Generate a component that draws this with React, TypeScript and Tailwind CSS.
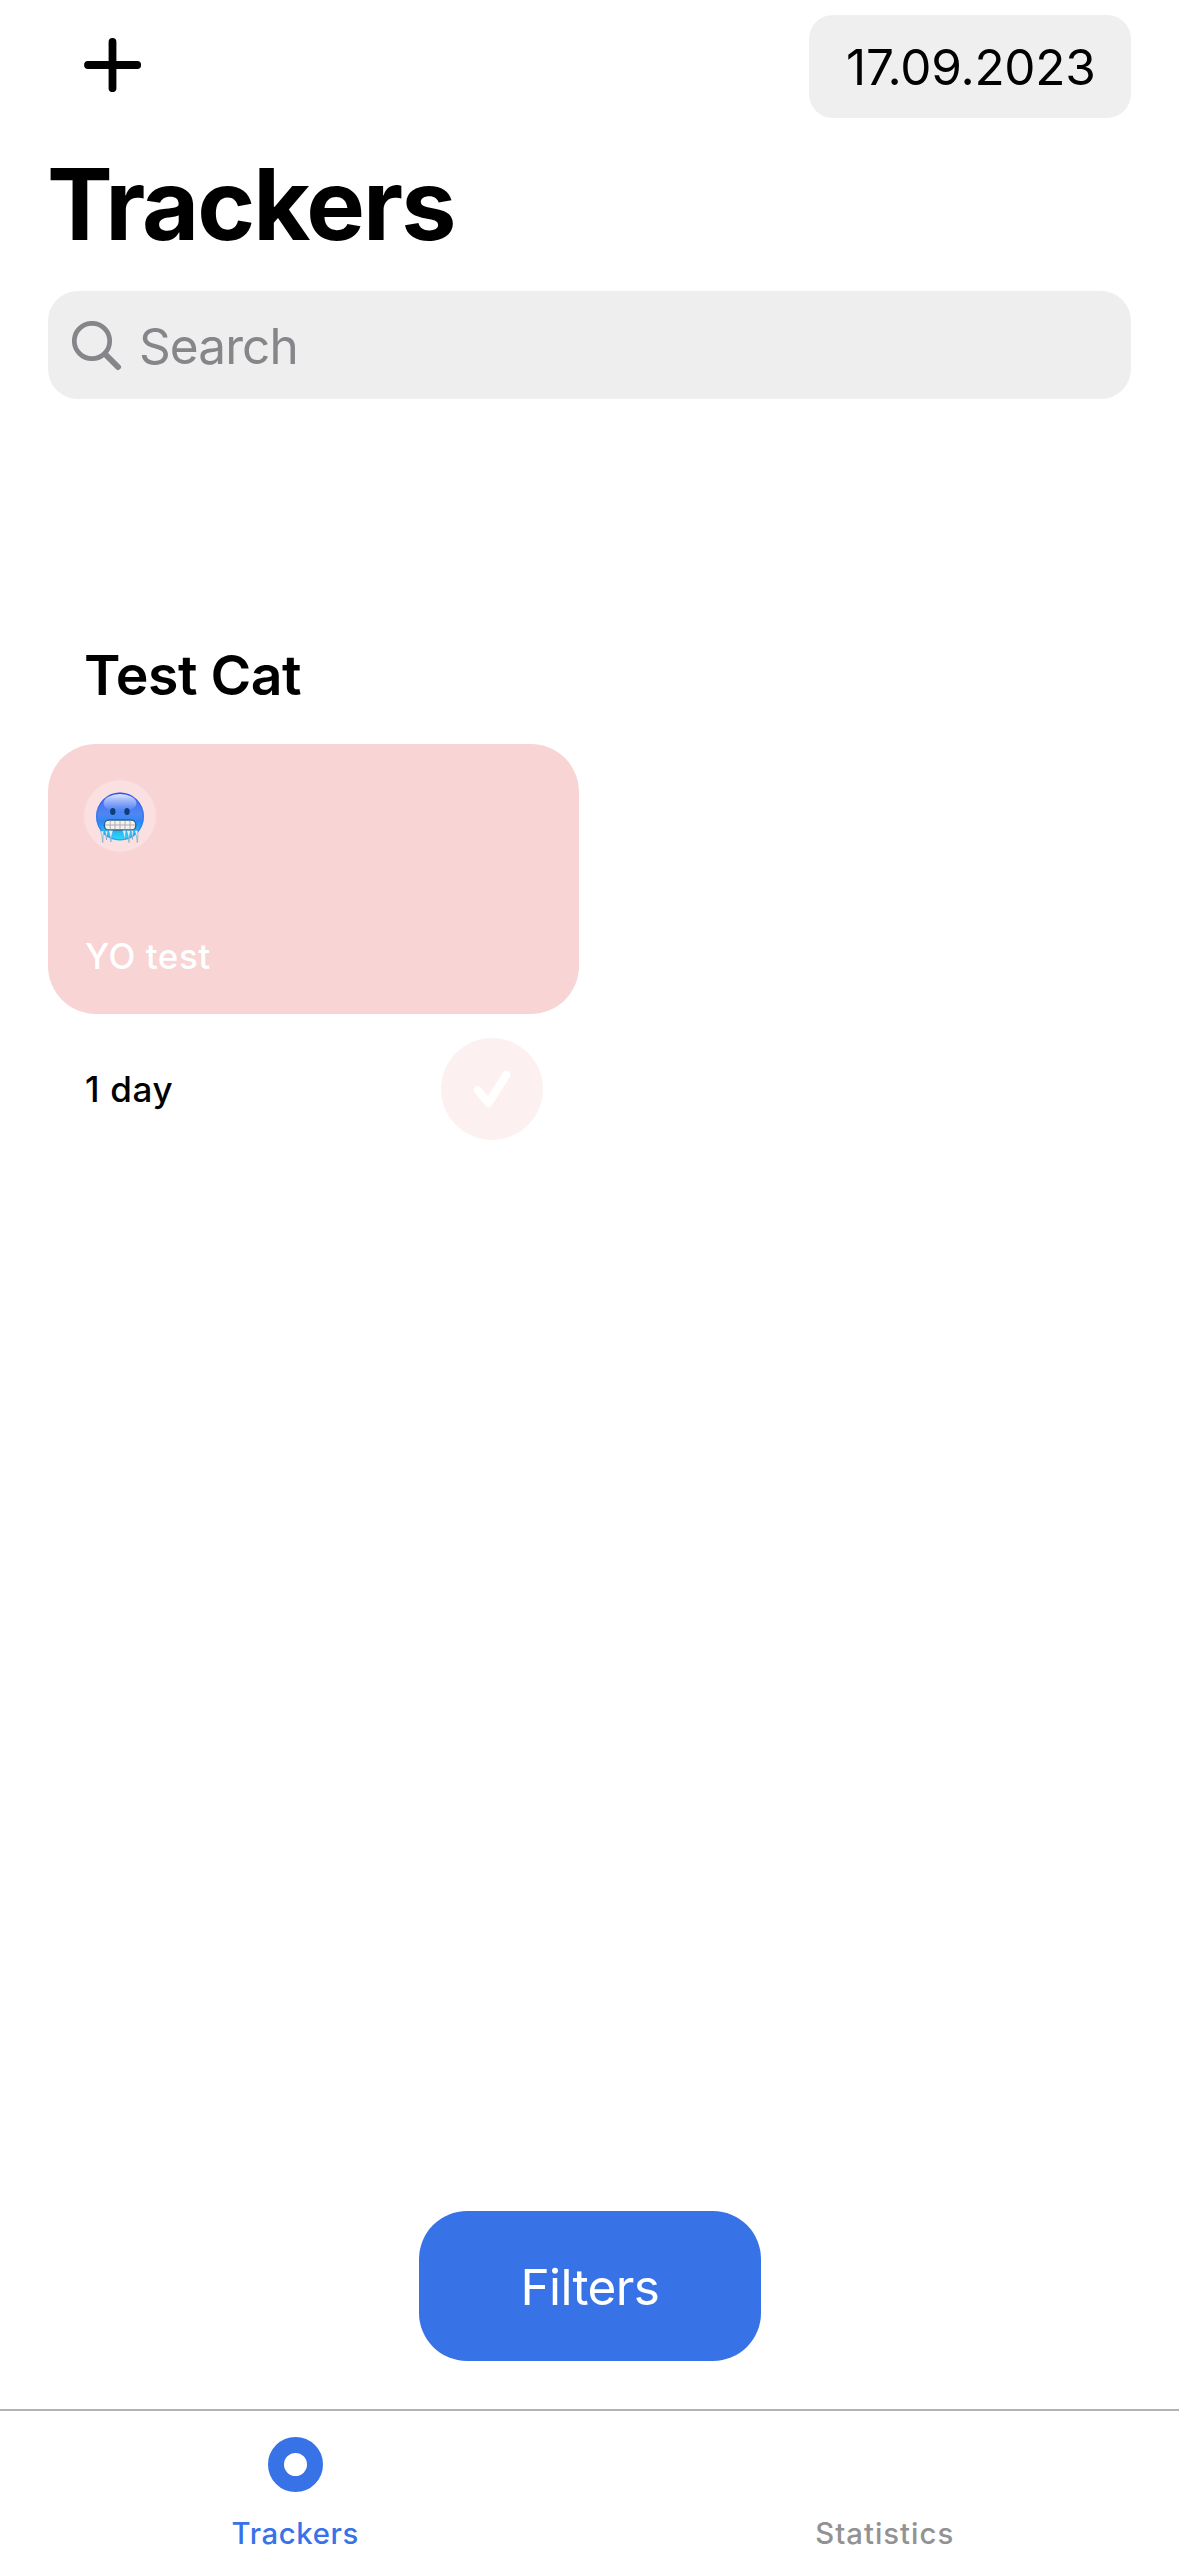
import React from 'react';

function PlusIcon() {
  return (
    <svg className="h-[54px] w-[58px]" viewBox="0 0 58 54" fill="none" stroke="#000" strokeWidth="7.8" strokeLinecap="round">
      <path d="M4 27h49.2M28.5 4v46.2" />
    </svg>
  );
}

function SearchIcon() {
  return (
    <svg className="mt-px h-[50px] w-[50px] shrink-0" viewBox="0 0 50 50" fill="none" stroke="#85858a" strokeLinecap="round">
      <circle cx="20" cy="20" r="17.7" strokeWidth="4.7" />
      <path d="M33.500 33.500L46 46" strokeWidth="6" />
    </svg>
  );
}

function ColdFace() {
  return (
    <svg className="h-[52px] w-[48px]" viewBox="0 0 48 52" fill="none">
      <defs>
        <linearGradient id="face" x1="0" y1="0" x2="0" y2="1">
          <stop offset="0" stopColor="#2a55f2" />
          <stop offset="0.25" stopColor="#4a78f2" />
          <stop offset="0.45" stopColor="#4f86f3" />
          <stop offset="0.6" stopColor="#2f86f6" />
          <stop offset="0.8" stopColor="#25b4f6" />
          <stop offset="1" stopColor="#2be0fb" />
        </linearGradient>
        <linearGradient id="shine" x1="0" y1="0" x2="0" y2="1">
          <stop offset="0" stopColor="#eef3ff" stopOpacity="0.95" />
          <stop offset="0.5" stopColor="#b9cdfc" stopOpacity="0.6" />
          <stop offset="1" stopColor="#8fb0fa" stopOpacity="0" />
        </linearGradient>
      </defs>
      <circle cx="24" cy="24.500" r="24" fill="url(#face)" />
      <circle cx="24" cy="24.500" r="23.300" stroke="#2458e0" strokeOpacity="0.4" strokeWidth="1.200" />
      <ellipse cx="24" cy="11" rx="16.500" ry="9" fill="url(#shine)" />
      <ellipse cx="16.800" cy="19.500" rx="2.700" ry="3.500" fill="#0b3f78" />
      <ellipse cx="31" cy="19.500" rx="2.700" ry="3.500" fill="#0b3f78" />
      <rect x="8.400" y="28" width="31.400" height="10" rx="4.600" fill="#f4f1f0" stroke="#2d5f86" strokeWidth="1.300" />
      <path d="M9 33h30M14.200 29v8.400M19 29v8.400M24 29v8.400M29 29v8.400M34 29v8.400" stroke="#a9a4a8" strokeWidth="0.900" />
      <path
        d="M4.500 39h3.500l-.8 4-.4 7.500-.9-7zM9 39h3l-1 4-.5 5-.6-5zM12.500 38.500h4.500l-1.200 5-.9 6.500-.9-6.500zM26.500 38.500h3.500l-.6 5-.8 4.500-.8-4.500zM30.500 38.500h4l-.8 4-.7 8-.9-7zM35 38.500h2.500l-.5 4-.6 5-.6-5zM38.500 38.500h3.200l.2 4-.6 8-.8-6.500z"
        fill="#e2f2fb"
        stroke="#5f9fc4"
        strokeWidth="0.600"
      />
    </svg>
  );
}

function CheckIcon() {
  return (
    <svg className="h-[102px] w-[102px]" viewBox="0 0 102 102" fill="none" stroke="#fff" strokeWidth="8" strokeLinecap="round" strokeLinejoin="round">
      <path d="M36.600 52L47.500 65L65.300 37" />
    </svg>
  );
}

function TrackerCard() {
  return (
    <article className="w-[531px]">
      <div className="flex h-[270px] flex-col justify-between rounded-[48px] bg-[#f8d4d4] pt-9 pr-9 pb-[38px] pl-9">
        <div className="flex h-[72px] w-[72px] items-center justify-center rounded-full bg-[#fbe0e1] pt-1">
          <ColdFace />
        </div>
        <p className="pl-px text-[35px] leading-[40px] font-medium tracking-[0.5px] text-white">YO test</p>
      </div>
      <div className="flex items-center justify-between pt-6 pr-9 pl-[37px]">
        <p className="text-[35px] leading-[40px] font-medium tracking-[0.7px]">1 day</p>
        <button className="rounded-full bg-[#fcf1f0]">
          <CheckIcon />
        </button>
      </div>
    </article>
  );
}

export default function App() {
  return (
    <div className="flex h-[2556px] w-[1179px] flex-col overflow-hidden bg-white font-['Inter',sans-serif] whitespace-nowrap text-black">
      <header className="flex flex-col px-12 pt-[15px]">
        <div className="flex h-[103px] items-start justify-between pl-9">
          <button className="mt-[23px]">
            <PlusIcon />
          </button>
          <button className="flex h-[103px] w-[322px] items-center rounded-[24px] bg-[#efefef] pl-[37px] text-[49.5px] leading-[60px] tracking-[-0.25px]">
            17.09.2023
          </button>
        </div>
        <h1 className="mt-[26px] -ml-px text-[98.6px] leading-[120px] font-bold tracking-[-2px]">Trackers</h1>
        <div className="mt-[27px] flex h-[108px] items-center rounded-[30px] bg-[#eeeeee] pl-6 text-[#85858a]">
          <SearchIcon />
          <span className="ml-[17px] pt-px text-[49.5px] leading-[60px] tracking-[-0.9px]">Search</span>
        </div>
      </header>

      <main className="flex flex-1 flex-col px-12 pt-[246px]">
        <h2 className="pl-9 text-[55.3px] leading-[60px] font-semibold tracking-[-0.45px]">Test Cat</h2>
        <div className="mt-[39px]">
          <TrackerCard />
        </div>
        <button className="mt-auto mb-12 flex h-[150px] w-[342px] items-center self-center rounded-[48px] bg-[#3772e7] pt-px pl-[102px] text-[49.5px] leading-[60px] tracking-[-0.65px] text-white">
          Filters
        </button>
      </main>

      <nav className="grid h-[147px] grid-cols-2 border-t-2 border-[#b2b2b4] text-[29.3px] leading-[36px] font-medium">
        <button className="flex flex-col items-center pt-[26px] pl-px text-[#3772e7]">
          <span className="h-[55px] w-[55px] rounded-full border-[16.5px] border-[#3772e7]" />
          <span className="mt-6 tracking-[0.64px]">Trackers</span>
        </button>
        <button className="flex flex-col items-center pt-[105px] pl-px text-[#929292]">
          <span className="tracking-[1px]">Statistics</span>
        </button>
      </nav>
    </div>
  );
}
